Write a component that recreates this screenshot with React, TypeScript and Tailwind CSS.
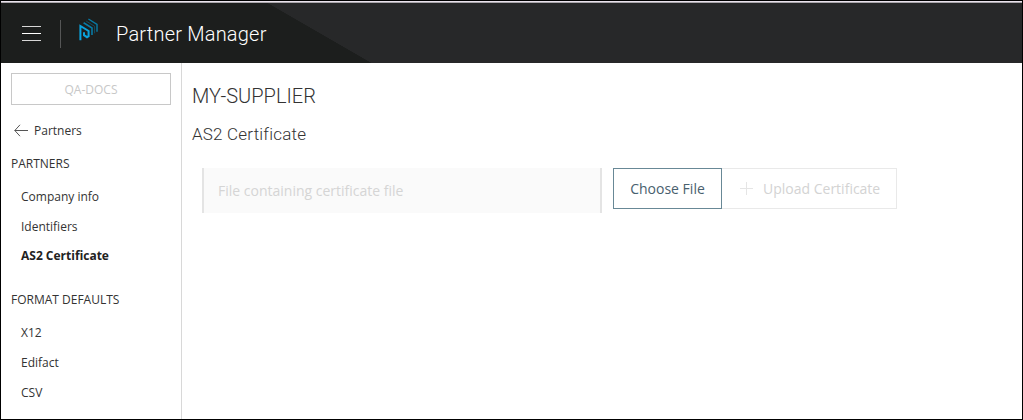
import React from "react";

function Logo() {
  return (
    <svg className="h-6 w-5 shrink-0" viewBox="0 0 20 24" fill="none" aria-hidden="true">
      <path d="M1.4 22.2V8L9.6 13V18.2L8 19.2L5 17.2V14.2" stroke="#0aa2dd" strokeWidth="2" />
      <path d="M4.6 4.8L13 10V17" stroke="#087aa5" strokeWidth="1.6" />
      <path d="M7.2 3.1L15.6 8.3V15.3" stroke="#11526a" strokeWidth="0.9" />
      <path d="M9.4 1L18 6.4V13.8" stroke="#087aa5" strokeWidth="1.4" />
    </svg>
  );
}

function Header() {
  return (
    <header className="flex h-[60px] shrink-0 items-center bg-[linear-gradient(30deg,#1c1e1d_0,#1c1e1d_185px,#272829_185.5px)] pl-[21px]">
      <button aria-label="Menu" className="flex h-[15px] w-[19px] flex-col justify-between">
        <span className="h-px w-full bg-[#d7d7d7]" />
        <span className="h-px w-full bg-white" />
        <span className="h-px w-full bg-[#d7d7d7]" />
      </button>
      <span className="ml-[19px] mt-px h-7 w-px bg-[#555656]" />
      <span className="-mt-1.5 ml-[18px] flex">
        <Logo />
      </span>
      <h1 className="ml-[17px] mt-px whitespace-nowrap font-['Roboto',sans-serif] text-[20px] font-light tracking-[0.21px] text-white">
        Partner Manager
      </h1>
    </header>
  );
}

function NavItem({ label, active = false }: { label: string; active?: boolean }) {
  return (
    <a className={active ? "block h-[30px] whitespace-nowrap pl-2.5 text-[12px] font-bold leading-[28px] text-[#222]" : "block h-[30px] whitespace-nowrap pl-2.5 text-[12px] leading-[30px] text-[#333]"}>
      {label}
    </a>
  );
}

function Sidebar() {
  return (
    <aside className="flex w-[181px] shrink-0 flex-col border-r border-[#d8d8d8] pl-2.5 pt-2.5 text-[12px] text-[#333]">
      <button className="h-8 w-40 border border-[#c8c8c8] pt-px text-[12px] text-[#c8c8c8]">QA-DOCS</button>
      <a className="mt-[18px] flex h-4 items-center pl-[3px] leading-4">
        <svg className="-mt-px mr-1.5 h-3.5 w-3.5" viewBox="0 0 14 14" fill="none" stroke="#555" aria-hidden="true">
          <path d="M14 6.5H.8M6 .8L.8 6.5L6 12.2" />
        </svg>
        Partners
      </a>
      <h2 className="mt-[17px] h-4 leading-4">PARTNERS</h2>
      <nav className="mt-2.5">
        <NavItem label="Company info" />
        <NavItem label="Identifiers" />
        <NavItem label="AS2 Certificate" active />
      </nav>
      <h2 className="mt-5 h-4 leading-4">FORMAT DEFAULTS</h2>
      <nav className="mt-2.5">
        <NavItem label="X12" />
        <NavItem label="Edifact" />
        <NavItem label="CSV" />
      </nav>
    </aside>
  );
}

export default function App() {
  return (
    <div className="flex h-[420px] w-[1023px] flex-col overflow-hidden border border-black bg-white font-['Open_Sans',sans-serif]">
      <div className="h-0.5 shrink-0 border-b border-[#aaa6ab] bg-[#e9e2ec]" />
      <Header />
      <div className="flex min-h-0 flex-1">
        <Sidebar />
        <main className="flex flex-1 flex-col pl-2.5">
          <h2 className="mt-[19px] h-7 whitespace-nowrap font-['Roboto',sans-serif] text-[20px] font-light leading-7 text-[#333]">
            MY-SUPPLIER
          </h2>
          <h3 className="mt-3 h-6 whitespace-nowrap font-['Roboto',sans-serif] text-[17px] font-light leading-6 tracking-[0.2px] text-[#333]">
            AS2 Certificate
          </h3>
          <div className="mt-[22px] flex items-start pl-2.5">
            <input
              readOnly
              placeholder="File containing certificate file"
              className="h-[45px] w-[400px] border-x-2 border-[#e4e4e4] bg-[#fafafa] px-3.5 text-[14px] text-[#d5d5d5] outline-none placeholder:text-[#d5d5d5]"
            />
            <button className="ml-[11px] h-[41px] w-[109px] whitespace-nowrap border border-[#688896] text-[14px] text-[#48606e]">
              Choose File
            </button>
            <button disabled className="flex h-[41px] w-[175px] items-center whitespace-nowrap border border-l-0 border-[#e9e9e9] pl-[18px] text-[14px] text-[#d3d3d3]">
              <svg className="mr-2.5 h-[13px] w-[13px]" viewBox="0 0 13 13" stroke="#e5e5e5" aria-hidden="true">
                <path d="M6.5 0V13M0 6.5H13" />
              </svg>
              Upload Certificate
            </button>
          </div>
        </main>
      </div>
    </div>
  );
}
